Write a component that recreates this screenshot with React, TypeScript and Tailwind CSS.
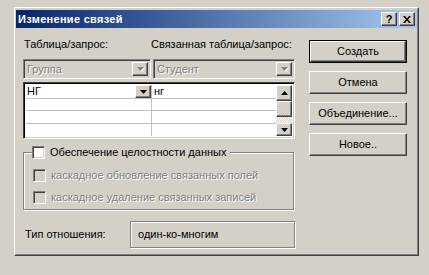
import React from "react";

const raised =
  "border border-t-white border-l-white border-b-[#404040] border-r-[#404040] shadow-[inset_-1px_-1px_#808080,inset_1px_1px_#d4d0c8]";
const sunken =
  "border border-t-[#808080] border-l-[#808080] border-b-white border-r-white shadow-[inset_1px_1px_#404040,inset_-1px_-1px_#d4d0c8]";
const etched = "border border-[#808080] shadow-[1px_1px_0_white,inset_1px_1px_0_white]";
const dis = "text-[#808080] [text-shadow:1px_1px_0_white]";

const Arrow = ({ up, gray }: { up?: boolean; gray?: boolean }) => (
  <svg width="7" height="4" viewBox="0 0 7 4" className={gray ? "drop-shadow-[1px_1px_0_white]" : ""}>
    <path d={up ? "M3.5 0 L7 4 L0 4 Z" : "M0 0 L7 0 L3.5 4 Z"} fill={gray ? "#808080" : "#000"} />
  </svg>
);

const DropBtn = ({ gray }: { gray?: boolean }) => (
  <div className={`w-[16px] h-full flex items-center justify-center bg-[#d4d0c8] ${raised}`}>
    <Arrow gray={gray} />
  </div>
);

const Check = ({ disabled, label }: { disabled?: boolean; label: string }) => (
  <div className="flex items-center gap-[5px] h-[13px] whitespace-nowrap">
    <div className={`w-[13px] h-[13px] ${sunken} ${disabled ? "bg-[#d4d0c8]" : "bg-white"}`} />
    <span className={disabled ? dis : "text-black"}>{label}</span>
  </div>
);

const Btn = ({ label, def }: { label: string; def?: boolean }) => (
  <div className={def ? "border border-black" : ""}>
    <div className={`flex items-center justify-center bg-[#d4d0c8] ${raised} ${def ? "h-[21px]" : "h-[23px]"}`}>
      {label}
    </div>
  </div>
);

export default function App() {
  return (
    <div
      className="w-[429px] h-[275px] bg-[#d4d0c8] pl-[14px] pt-[7px] text-[11px] leading-none text-black"
      style={{ fontFamily: '"Liberation Sans", Arial, sans-serif' }}
    >
      <div className="w-[405px] h-[249px] border border-t-white border-l-white border-b-[#404040] border-r-[#404040]">
        <div className="w-full h-full border border-t-[#d4d0c8] border-l-[#d4d0c8] border-b-[#808080] border-r-[#808080] pt-[1px]">
          {/* title bar */}
          <div className="h-[18px] flex items-center justify-between bg-gradient-to-r from-[#0a246a] to-[#a6caf0] pl-[2px] pr-[2px]">
            <span className="text-white font-bold text-[11px] tracking-[0.3px]">Изменение связей</span>
            <div className="flex gap-[2px]">
              <div className={`w-[16px] h-[14px] bg-[#d4d0c8] ${raised} flex items-center justify-center font-bold text-[11px]`}>?</div>
              <div className={`w-[16px] h-[14px] bg-[#d4d0c8] ${raised} flex items-center justify-center`}>
                <svg width="8" height="7" viewBox="0 0 8 7">
                  <path d="M0 0 L2 0 L4 2.5 L6 0 L8 0 L5 3.5 L8 7 L6 7 L4 4.5 L2 7 L0 7 L3 3.5 Z" fill="#000" />
                </svg>
              </div>
            </div>
          </div>

          <div className="flex pl-[7px] pt-[10px]">
            {/* left column */}
            <div className="w-[272px] flex flex-col">
              <div className="flex h-[12px] items-center whitespace-nowrap">
                <span className="w-[128px] pl-[1px]">Таблица/запрос:</span>
                <span>Связанная таблица/запрос:</span>
              </div>
              <div className="flex mt-[9px] h-[20px] gap-[2px]">
                <div className={`w-[128px] flex items-center ${sunken} bg-[#d4d0c8] p-[2px]`}>
                  <span className={`flex-1 pl-[1px] ${dis}`}>Группа</span>
                  <DropBtn gray />
                </div>
                <div className={`w-[142px] flex items-center ${sunken} bg-[#d4d0c8] p-[2px]`}>
                  <span className={`flex-1 pl-[1px] ${dis}`}>Студент</span>
                  <DropBtn gray />
                </div>
              </div>
              <div className="mt-[3px] h-[57px] w-[272px] flex border border-t-[#404040] border-l-[#404040] border-b-white border-r-white shadow-[inset_1px_1px_#000,inset_-1px_-1px_#d4d0c8] p-[2px] bg-white">
                <div className="flex-1 flex flex-col">
                  {[0, 1, 2, 3].map((i) => (
                    <div key={i} className={`flex h-[14px] ${i < 3 ? "border-b border-[#c0c0c0]" : ""}`}>
                      <div className="w-[126px] flex items-center border-r border-[#c0c0c0]">
                        {i === 0 ? (
                          <>
                            <span className="flex-1 pl-[1px]">НГ</span>
                            <div className="h-[13px]"><DropBtn /></div>
                          </>
                        ) : null}
                      </div>
                      <div className="flex-1 flex items-center pl-[2px]">{i === 0 ? "нг" : ""}</div>
                    </div>
                  ))}
                </div>
                <div className="w-[16px] flex flex-col">
                  <div className={`h-[16px] flex items-center justify-center bg-[#d4d0c8] ${raised}`}><Arrow up /></div>
                  <div className={`h-[16px] bg-[#d4d0c8] ${raised}`} />
                  <div className="flex-1 bg-[repeating-conic-gradient(#d4d0c8_0_25%,white_0_50%)] bg-[length:2px_2px]" />
                  <div className={`h-[13px] flex items-center justify-center bg-[#d4d0c8] ${raised}`}><Arrow /></div>
                </div>
              </div>

              {/* group box */}
              <div className={`relative mt-[13px] h-[58px] w-[271px] ${etched}`}>
                <div className="absolute left-[8px] top-[-7px] bg-[#d4d0c8] pr-[4px]">
                  <Check label="Обеспечение целостности данных" />
                </div>
                <div className="flex flex-col gap-[9px] pl-[9px] pt-[16px]">
                  <Check disabled label="каскадное обновление связанных полей" />
                  <Check disabled label="каскадное удаление связанных записей" />
                </div>
              </div>

              <div className="flex items-center mt-[11px] h-[27px]">
                <span className="w-[107px] pl-[2px]">Тип отношения:</span>
                <div className={`flex-1 h-full flex items-center pl-[7px] ${etched}`}>один-ко-многим</div>
              </div>
            </div>

            {/* right column */}
            <div className="ml-[14px] w-[98px] flex flex-col gap-[8px] pt-[2px]">
              <Btn label="Создать" def />
              <Btn label="Отмена" />
              <Btn label="Объединение..." />
              <Btn label="Новое.." />
            </div>
          </div>
        </div>
      </div>
    </div>
  );
}
